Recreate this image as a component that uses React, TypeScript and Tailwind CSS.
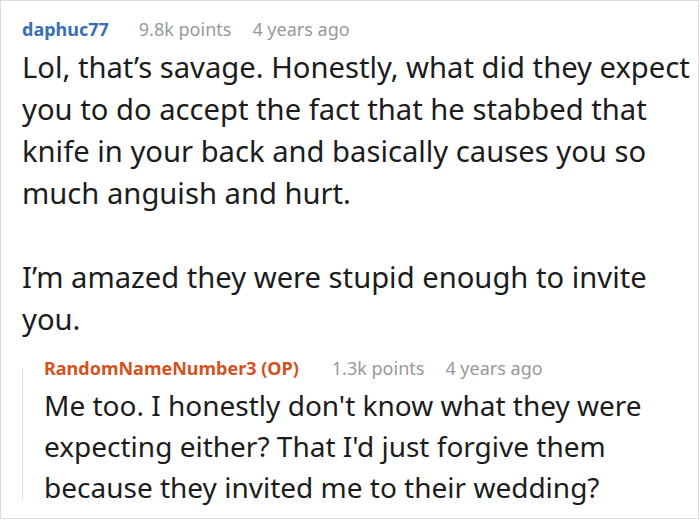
export default function App() {
    const font = { fontFamily: '"Noto Sans", "Open Sans", sans-serif' }

    return (
        <div className="w-[700px] h-[520px] bg-white" style={font}>
            <div className="w-[699px] h-[519px] border border-[#dcdcdc] pl-[21px] pt-[15px] pr-2">
                {/* main comment */}
                <div className="flex items-baseline text-[18px] leading-[27px]">
                    <span className="font-bold text-[#3a6db5]">daphuc77</span>
                    <span className="ml-[30px] text-[#999999]">9.8k points</span>
                    <span className="ml-[21px] text-[#999999]">4 years ago</span>
                </div>
                <div className="mt-[3px] text-[29.2px] leading-[42px] text-[#1c1c1c]">
                    <p>Lol, that’s savage. Honestly, what did they expect you to do accept the fact that he stabbed that knife in your back and basically causes you so much anguish and hurt.</p>
                    <p className="mt-[42px]">I’m amazed they were stupid enough to invite you.</p>
                </div>

                {/* reply */}
                <div className="flex mt-[15px]">
                    <div className="w-px bg-[#dedede] mt-[13px] mb-[8px]" />
                    <div className="pl-[21px]">
                        <div className="flex items-baseline text-[18px] leading-[27px]">
                            <span className="font-bold text-[#d4521d]">RandomNameNumber3 (OP)</span>
                            <span className="ml-[33px] text-[#999999]">1.3k points</span>
                            <span className="ml-[21px] text-[#999999]">4 years ago</span>
                        </div>
                        <p className="mt-[3px] text-[28px] leading-[41px] text-[#1c1c1c] w-[620px]">
                            Me too. I honestly don't know what they were expecting either? That I'd just forgive them because they invited me to their wedding?
                        </p>
                    </div>
                </div>
            </div>
        </div>
    )
}
